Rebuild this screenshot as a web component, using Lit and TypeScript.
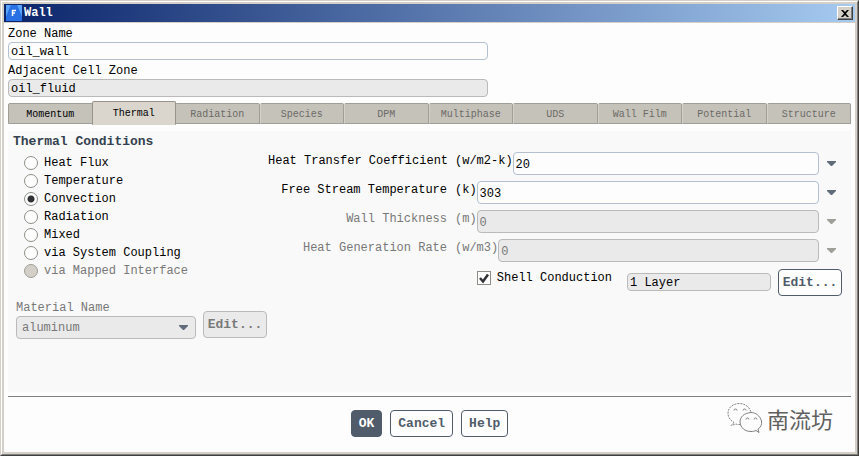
import { LitElement, html, css, svg } from "lit";
import { customElement, state } from "lit/decorators.js";

interface Field {
  id: string;
  name: string;
  unit: string;
  value: string;
  disabled: boolean;
}

const TABS = ["Momentum", "Thermal", "Radiation", "Species", "DPM", "Multiphase", "UDS", "Wall Film", "Potential", "Structure"];
const ENABLED_TABS = ["Momentum", "Thermal"];

const CONDITIONS = ["Heat Flux", "Temperature", "Convection", "Radiation", "Mixed", "via System Coupling", "via Mapped Interface"];

const FIELDS: Field[] = [
  { id: "htc", name: "Heat Transfer Coefficient", unit: "(w/m2-k)", value: "20", disabled: false },
  { id: "fst", name: "Free Stream Temperature", unit: "(k)", value: "303", disabled: false },
  { id: "thick", name: "Wall Thickness", unit: "(m)", value: "0", disabled: true },
  { id: "rate", name: "Heat Generation Rate", unit: "(w/m3)", value: "0", disabled: true },
];

const arrow = svg`<path d="M0 0H9V1L5 5H4L0 1Z" fill="currentColor"/>`;

@customElement("app-root")
export class AppRoot extends LitElement {
  @state() private tab = "Thermal";
  @state() private condition = "Convection";

  static styles = css`
    :host {
      display: block;
      font: 12px/16px "Liberation Mono", "Noto Sans CJK SC", monospace;
      color: #000;
    }
    * { box-sizing: border-box; }
    button, input, select { font: inherit; color: inherit; margin: 0; }
    .window {
      min-height: 100vh;
      display: flex;
      border: 1px solid #d4d0c8;
      border-right-color: #404040;
      border-bottom-color: #404040;
    }
    .frame {
      flex: 1;
      min-width: 0;
      display: flex;
      flex-direction: column;
      border: 1px solid #fff;
      border-right-color: #808080;
      border-bottom-color: #808080;
      background: #d4d0c8;
      padding: 2px;
    }
    .titlebar {
      display: flex;
      align-items: center;
      height: 18px;
      padding: 0 2px;
      margin-bottom: 1px;
      background: linear-gradient(90deg, #0a246a, #a6caf0);
      color: #fff;
    }
    .logo { display: block; width: 16px; height: 16px; }
    .title { flex: 1; margin: 0 2px; font-size: 12px; font-weight: bold; }
    .close {
      display: flex;
      align-items: center;
      justify-content: center;
      width: 16px;
      height: 14px;
      padding: 0;
      color: #000;
      background: #d4d0c8;
      border: 1px solid #fff;
      border-right-color: #404040;
      border-bottom-color: #404040;
      box-shadow: inset -1px -1px #808080;
    }
    .body {
      flex: 1;
      display: flex;
      flex-direction: column;
      padding: 4px 4px 0;
      background: #fdfdfd;
    }
    .zone { display: flex; flex-direction: column; width: 480px; max-width: 100%; margin-bottom: 4px; }
    .zone label { line-height: 15px; }
    .text {
      min-width: 0;
      height: 18px;
      padding: 2px 2px 0;
      border: 1px solid #b4c0d0;
      border-radius: 4px;
      background: #fdfdfd;
      outline: none;
    }
    .text:read-only, .text:disabled { background: #eaeaea; border-color: #bababa; }
    .text:disabled { color: #787878; }
    .tabs { display: flex; margin-bottom: 6px; }
    .tab {
      flex: 1 1 0;
      min-width: 0;
      height: 21px;
      margin: 2px 0 1px;
      padding: 2px 0 0;
      font-size: 10px;
      background: #c5c2ba;
      border: 1px solid #a09e98;
      border-left-color: #d4d1c9;
      border-radius: 2px 2px 0 0;
      white-space: nowrap;
    }
    .tab:first-child { border-left-color: #a09e98; }
    .tab:disabled { color: #6c6a66; }
    .tab.on {
      flex-basis: 2px;
      height: 24px;
      margin: 0 -1px 0;
      background: #dad5cd;
      border-color: #96938d;
      border-bottom-color: #dad5cd;
      z-index: 1;
    }
    .panel { flex: 1; display: flex; padding: 3px 8px 8px 0; background: #f9f9f9; }
    .left { flex: 0 0 260px; }
    .heading { margin: 0 0 4px 5px; font-size: 13px; line-height: 16px; color: #34414e; }
    .conditions { margin: 0 0 20px; padding: 0 0 0 16px; border: 0; }
    .option { display: flex; align-items: center; height: 18px; gap: 6px; }
    .radio {
      appearance: none;
      width: 14px;
      height: 14px;
      border: 1px solid #8e8e88;
      border-radius: 50%;
      background: #fff;
    }
    .radio:checked { background: radial-gradient(circle, #303236 3px, #fff 4px); }
    .radio:disabled { background: #d4d0c8; border-color: #a09e98; }
    .muted { color: #787878; }
    .material { display: flex; align-items: flex-start; gap: 7px; padding-left: 8px; }
    .pick { position: relative; flex: 0 0 180px; display: flex; flex-direction: column; }
    .pick .arrow { position: absolute; right: 8px; bottom: 9px; }
    .select {
      appearance: none;
      height: 23px;
      padding: 0 5px;
      border: 1px solid #bababa;
      border-radius: 4px;
      background: #eaeaea;
      opacity: 1;
      color: #787878;
    }
    .arrow { display: block; width: 9px; height: 5px; color: #606c7a; pointer-events: none; }
    .btn {
      height: 27px;
      padding: 0 7px;
      font-size: 13px;
      font-weight: bold;
      color: #505c6a;
      background: #fefefe;
      border: 1px solid #505c6a;
      border-radius: 4px;
    }
    .btn:disabled { color: #787878; background: #eaeaea; border-color: #bababa; }
    .edit { width: 64px; padding: 0; }
    .material .edit { margin-top: 11px; }
    .primary { color: #fff; background: #505c6a; }
    .form { flex: 1; min-width: 0; display: flex; flex-direction: column; gap: 6px; padding-top: 18px; }
    .row { display: flex; align-items: flex-start; }
    .label { display: flex; gap: 8px; line-height: 18px; white-space: nowrap; }
    .name { width: 179px; text-align: right; }
    .row .value { flex: 1; height: 23px; }
    .drop {
      display: flex;
      align-items: center;
      justify-content: center;
      width: 24px;
      height: 22px;
      padding: 0;
      border: 0;
      background: none;
    }
    .drop:disabled .arrow { color: #a09e98; }
    .shell { display: flex; justify-content: flex-end; align-items: flex-start; gap: 7px; margin: 1px 1px 0 0; }
    .check { display: flex; align-items: center; gap: 6px; height: 18px; margin-right: 8px; }
    .box {
      appearance: none;
      width: 14px;
      height: 14px;
      border: 1px solid #8e8e88;
      background: #fff;
    }
    .tick { position: relative; display: flex; }
    .tick svg { position: absolute; inset: 0; pointer-events: none; visibility: hidden; }
    .box:checked + svg { visibility: visible; }
    .layers { width: 144px; margin-top: 4px; }
    .footer {
      position: relative;
      display: flex;
      justify-content: center;
      gap: 8px;
      margin-top: 4px;
      padding: 13px 0 15px;
      border-top: 1px solid #808080;
    }
    .brand {
      position: absolute;
      right: 18px;
      top: 5px;
      display: flex;
      align-items: center;
      gap: 4px;
      font: 22px/32px "Noto Sans CJK SC", sans-serif;
      color: #606060;
    }
  `;

  private arrowIcon() {
    return html`<svg class="arrow" viewBox="0 0 9 5" aria-hidden="true">${arrow}</svg>`;
  }

  private fieldRow(f: Field) {
    return html`<div class="row">
      <label class="label ${f.disabled ? "muted" : ""}" for=${f.id}><span class="name">${f.name}</span><span>${f.unit}</span></label>
      <input class="text value" id=${f.id} .value=${f.value} ?disabled=${f.disabled} />
      <button class="drop" aria-label="${f.name} options" ?disabled=${f.disabled}>${this.arrowIcon()}</button>
    </div>`;
  }

  render() {
    return html`<div class="window"><div class="frame">
      <header class="titlebar">
        <svg class="logo" viewBox="0 0 16 16" aria-hidden="true">
          <rect width="16" height="16" fill="#2f7df0" />
          <path d="M0 0H5L0 12Z" fill="#58a4fa" /><path d="M11 0H16V12Z" fill="#58a4fa" />
          <path d="M5 0H11L16 12V16H0V12Z" fill="#2870e4" />
          <path d="M6 5.500h4M6 8h3M6.500 5v6" stroke="#fff" stroke-width="1.500" fill="none" />
        </svg>
        <h1 class="title">Wall</h1>
        <button class="close" aria-label="Close">
          <svg width="8" height="7" viewBox="0 0 8 7" aria-hidden="true"><path d="M0 0h2l2 2 2-2h2L5 3.500 8 7H6L4 5 2 7H0l3-3.500z" fill="#000" /></svg>
        </button>
      </header>
      <main class="body">
        <div class="zone"><label for="zone">Zone Name</label><input class="text" id="zone" value="oil_wall" /></div>
        <div class="zone"><label for="adj">Adjacent Cell Zone</label><input class="text" id="adj" value="oil_fluid" readonly /></div>
        <div class="tabs" role="tablist">
          ${TABS.map((t) => html`<button class="tab ${t === this.tab ? "on" : ""}" role="tab" aria-selected=${t === this.tab}
            ?disabled=${!ENABLED_TABS.includes(t)} @click=${() => (this.tab = t)}>${t}</button>`)}
        </div>
        <section class="panel">
          <div class="left">
            <h2 class="heading">Thermal Conditions</h2>
            <fieldset class="conditions" aria-label="Thermal Conditions">
              ${CONDITIONS.map((c) => {
                const off = c === "via Mapped Interface";
                return html`<label class="option ${off ? "muted" : ""}"><input class="radio" type="radio" name="condition"
                  .checked=${c === this.condition} ?disabled=${off} @change=${() => (this.condition = c)} />${c}</label>`;
              })}
            </fieldset>
            <div class="material">
              <div class="pick">
                <label class="muted" for="mat">Material Name</label>
                <select class="select" id="mat" disabled><option>aluminum</option></select>
                ${this.arrowIcon()}
              </div>
              <button class="btn edit" disabled>Edit...</button>
            </div>
          </div>
          <div class="form">
            ${FIELDS.map((f) => this.fieldRow(f))}
            <div class="shell">
              <label class="check"><span class="tick"><input class="box" type="checkbox" checked />
                <svg width="14" height="14" viewBox="0 0 14 14" aria-hidden="true"><path d="M3 7l3 3.500L11 3.500" fill="none" stroke="#303236" stroke-width="2.500" /></svg></span>Shell Conduction</label>
              <input class="text layers" aria-label="Layers" value="1 Layer" readonly />
              <button class="btn edit">Edit...</button>
            </div>
          </div>
        </section>
        <footer class="footer">
          <button class="btn primary">OK</button>
          <button class="btn">Cancel</button>
          <button class="btn">Help</button>
          <div class="brand">
            <svg width="36" height="32" viewBox="0 0 36 32" fill="#fdfdfd" stroke="#808080" stroke-width="1" aria-hidden="true">
              <path stroke-dasharray="2 1" d="M7 20.500L4 23.500 9 22C11 23 14 22.500 16 22C23 20 25 16 24 10C22 4 17 1.500 12 1.500C5 2 1 6 1 11.500C1 15 3 18 7 20.500Z" />
              <path d="M29 28.500L32 30.500 31 27C34 25 35 22.500 34.500 19C33 14 29 10.500 24 10.500C17 11 13 15 13 20C13.500 26 18 29.500 24 29.500C26 29.500 28 29 29 28.500Z" />
              <path fill="none" d="M7 8.500a1.500 1.500 0 0 1 3 0M16 8.500a1.500 1.500 0 0 1 3 0M19 17.500a1.500 1.500 0 0 1 3 0M27 17.500a1.500 1.500 0 0 1 3 0" />
            </svg>
            <span>南流坊</span>
          </div>
        </footer>
      </main>
    </div></div>`;
  }
}
